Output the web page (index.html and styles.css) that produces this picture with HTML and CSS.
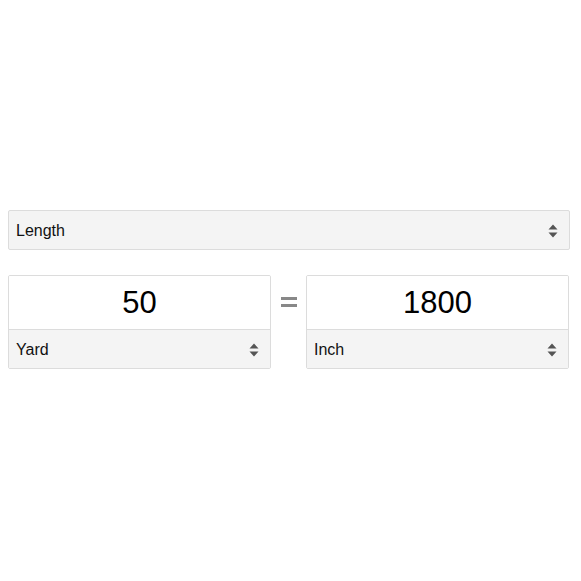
FILE: index.html
```html
<!DOCTYPE html>
<html>
<head>
<meta charset="utf-8">
<link rel="stylesheet" href="styles.css">
</head>
<body>
<main class="converter">
  <div class="select select-top">
    <span class="select-label">Length</span>
    <svg class="arrows" width="10" height="14" viewBox="0 0 10 14"><path d="M5 0.5 L9.5 5.5 H0.5 Z M5 13.5 L9.5 8.5 H0.5 Z" fill="#555"/></svg>
  </div>
  <div class="row">
    <div class="box">
      <div class="value">50</div>
      <div class="select select-unit">
        <span class="select-label">Yard</span>
        <svg class="arrows" width="10" height="14" viewBox="0 0 10 14"><path d="M5 0.5 L9.5 5.5 H0.5 Z M5 13.5 L9.5 8.5 H0.5 Z" fill="#555"/></svg>
      </div>
    </div>
    <div class="equals"><span class="bar"></span><span class="bar"></span></div>
    <div class="box">
      <div class="value">1800</div>
      <div class="select select-unit">
        <span class="select-label">Inch</span>
        <svg class="arrows" width="10" height="14" viewBox="0 0 10 14"><path d="M5 0.5 L9.5 5.5 H0.5 Z M5 13.5 L9.5 8.5 H0.5 Z" fill="#555"/></svg>
      </div>
    </div>
  </div>
</main>
</body>
</html>
```
FILE: styles.css
```css
html, body {
  margin: 0;
  padding: 0;
  background: #fff;
}
body {
  font-family: "Liberation Sans", Arial, sans-serif;
  color: #111;
}
.converter {
  padding: 210px 0 0 8px;
  width: 562px;
  display: flex;
  flex-direction: column;
  gap: 25px;
}
.select {
  display: flex;
  align-items: center;
  justify-content: space-between;
  background: #f4f4f4;
  padding: 2px 11px 0 7px;
  font-size: 16px;
  box-sizing: border-box;
}
.select-top {
  height: 40px;
  border: 1px solid #dcdcdc;
  border-radius: 2px;
}
.select-label {
  line-height: 1;
}
.arrows {
  display: block;
}
.row {
  display: flex;
  align-items: flex-start;
  width: 561px;
}
.box {
  width: 263px;
  box-sizing: border-box;
  border: 1px solid #dcdcdc;
  border-radius: 2px;
  overflow: hidden;
}
.value {
  height: 53px;
  background: #fff;
  display: flex;
  align-items: center;
  justify-content: center;
  font-size: 31px;
  color: #000;
  border-bottom: 1px solid #dcdcdc;
}
.select-unit {
  height: 38px;
}
.equals {
  width: 35px;
  height: 54px;
  display: flex;
  flex-direction: column;
  align-items: center;
  justify-content: center;
  gap: 4px;
  box-sizing: border-box;
}
.bar {
  display: block;
  width: 16px;
  height: 3px;
  background: #888;
}
```
